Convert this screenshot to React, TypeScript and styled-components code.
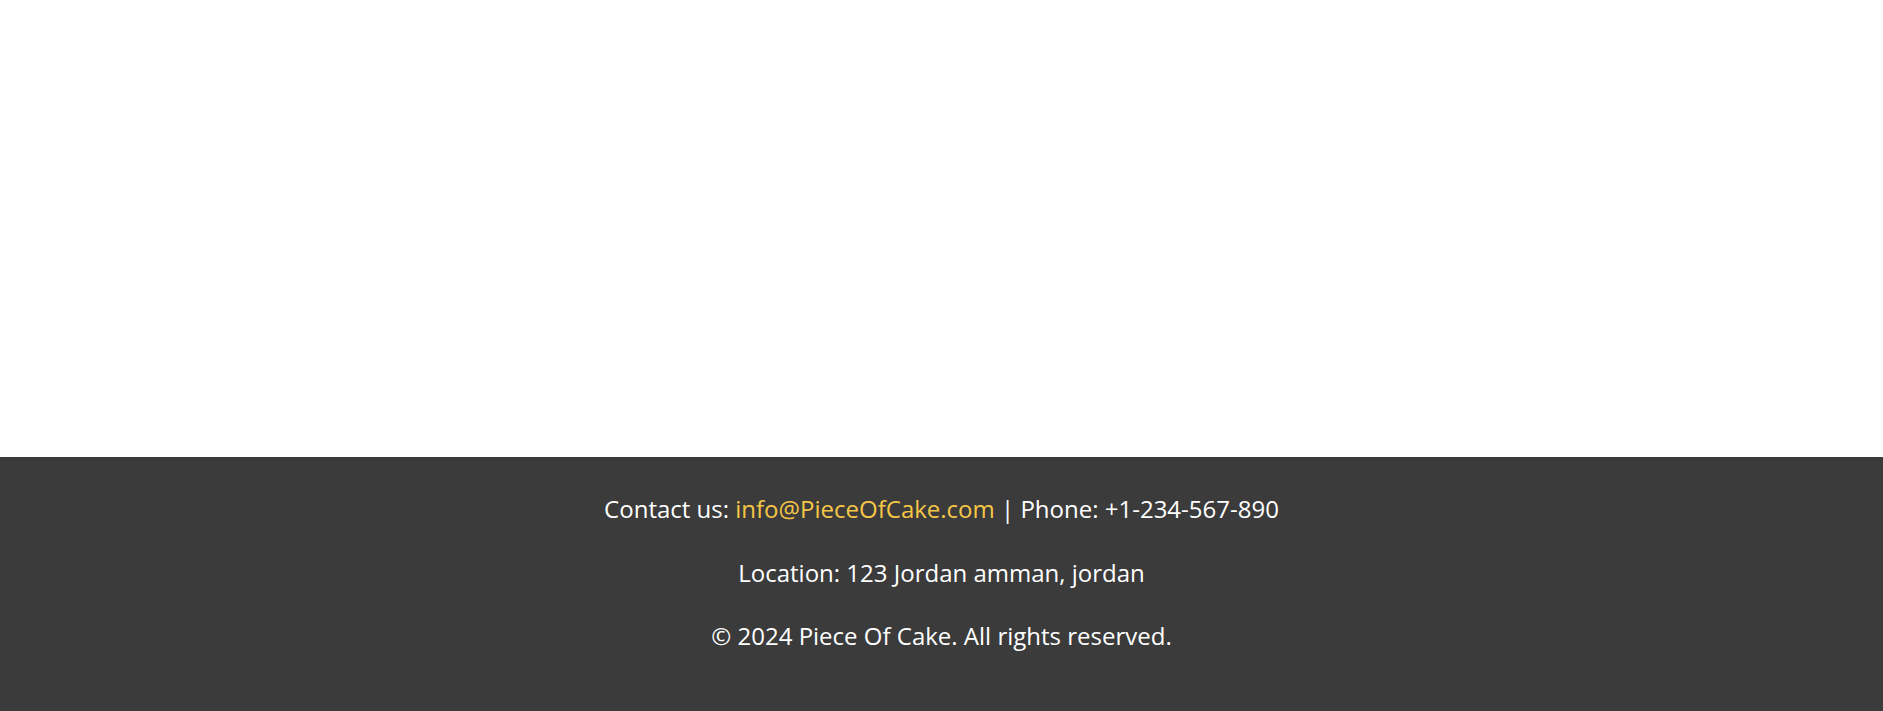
import React from "react";
import styled, { createGlobalStyle } from "styled-components";

const GlobalStyle = createGlobalStyle`
  html, body {
    margin: 0;
    padding: 0;
    background: #ffffff;
  }
  body {
    font-family: "Open Sans", "Noto Sans", "Liberation Sans", sans-serif;
  }
`;

const Page = styled.div`
  display: flex;
  flex-direction: column;
  min-height: 711px;
`;

const Main = styled.main`
  height: 457px;
  background: #ffffff;
`;

const Footer = styled.footer`
  flex: 1;
  background: #3b3b3b;
  color: #ffffff;
  display: flex;
  flex-direction: column;
  align-items: center;
  gap: 31.5px;
  padding: 36px 0 40px;
`;

const Line = styled.p`
  margin: 0;
  font-size: 24px;
  line-height: 32px;
  text-align: center;
  white-space: nowrap;
`;

const Link = styled.a`
  color: #f6c646;
  text-decoration: none;
`;

export default function App() {
  return (
    <>
      <GlobalStyle />
      <Page>
        <Main />
        <Footer>
          <Line>
            Contact us: <Link href="#">info@PieceOfCake.com</Link> | Phone: +1-234-567-890
          </Line>
          <Line>Location: 123 Jordan amman, jordan</Line>
          <Line>© 2024 Piece Of Cake. All rights reserved.</Line>
        </Footer>
      </Page>
    </>
  );
}
